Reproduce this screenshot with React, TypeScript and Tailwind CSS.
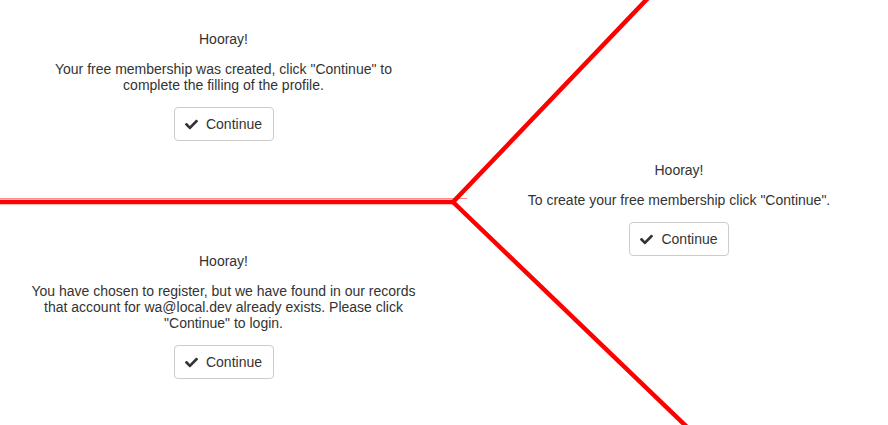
import { FaCheck } from "react-icons/fa";

function ContinueButton() {
  return (
    <button className="flex h-[34px] w-[100px] items-center justify-center gap-[8px] rounded-[4px] border border-[#cccccc] bg-white text-[14px] text-[#333333]">
      <FaCheck className="h-[13px] w-[13px]" />
      Continue
    </button>
  );
}

function Panel({ message, width }: { message: string; width: string }) {
  return (
    <div className="flex flex-col items-center gap-[14px] text-center">
      <p>Hooray!</p>
      <p className={width}>{message}</p>
      <ContinueButton />
    </div>
  );
}

export default function App() {
  return (
    <div
      className="relative flex h-[425px] w-[888px] overflow-hidden bg-white text-[14px] leading-[16px] text-[#333333]"
      style={{ fontFamily: '"Liberation Sans", Arial, sans-serif' }}
    >
      {/* Left column: two stacked results */}
      <div className="flex w-[447px] flex-col">
        <div className="h-[202px] pt-[31px]">
          <Panel
            width="w-[390px]"
            message={'Your free membership was created, click "Continue" to complete the filling of the profile.'}
          />
        </div>
        <div className="pt-[51px]">
          <Panel
            width="w-[390px]"
            message={'You have chosen to register, but we have found in our records that account for wa@local.dev already exists. Please click "Continue" to login.'}
          />
        </div>
      </div>

      {/* Right column */}
      <div className="flex-1 pt-[162px] pl-[23px]">
        <Panel
          width="w-[400px]"
          message={'To create your free membership click "Continue".'}
        />
      </div>

      {/* Red divider drawing */}
      <svg
        className="pointer-events-none absolute inset-0"
        width="888"
        height="425"
        viewBox="0 0 888 425"
      >
        <line x1="0" y1="198.5" x2="467" y2="198.5" stroke="#ff8a8a" strokeWidth="1" />
        <polyline
          points="649,-3 453,202 0,202"
          fill="none"
          stroke="#ff0000"
          strokeWidth="4.5"
          strokeLinejoin="miter"
        />
        <line x1="453" y1="202" x2="687" y2="427" stroke="#ff0000" strokeWidth="4.5" />
      </svg>
    </div>
  );
}
